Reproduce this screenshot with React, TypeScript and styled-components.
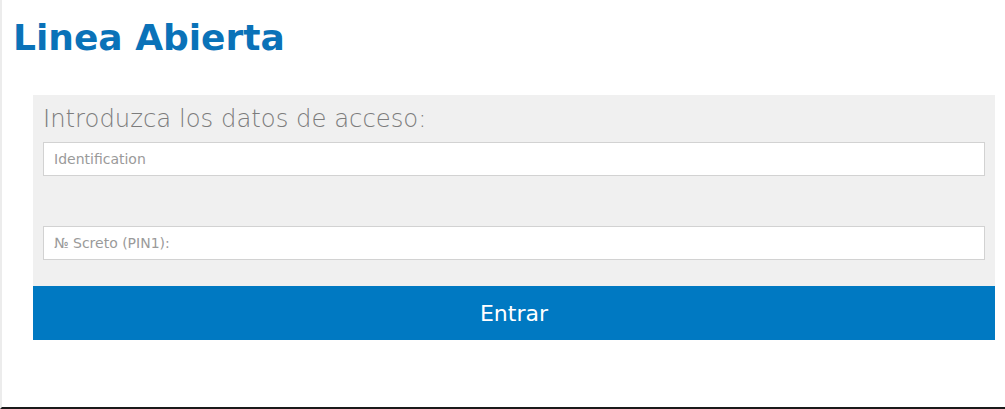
import styled, { createGlobalStyle } from 'styled-components'

const Global = createGlobalStyle`
  html, body {
    margin: 0;
    padding: 0;
    background: #fff;
  }
  body {
    font-family: "DejaVu Sans", Verdana, sans-serif;
  }
`

const Page = styled.div`
  height: 407px;
  border-left: 2px solid #ececec;
  border-bottom: 2px solid #1a1a1a;
  box-sizing: content-box;
  display: flex;
  flex-direction: column;
`

const Title = styled.h1`
  margin: 18px 0 0 11px;
  font-size: 36px;
  font-weight: bold;
  color: #0a72b8;
  line-height: 40px;
`

const LoginBox = styled.form`
  margin: 37px 10px 0 31px;
  display: flex;
  flex-direction: column;
`

const Panel = styled.div`
  background: #f0f0f0;
  padding: 8px 10px 26px 10px;
  display: flex;
  flex-direction: column;
`

const Legend = styled.div`
  font-size: 24.3px;
  font-weight: 200;
  color: #7c7c7c;
  line-height: 32px;
  margin-bottom: 7px;
`

const Field = styled.input<{ $gap?: number }>`
  height: 34px;
  box-sizing: border-box;
  border: 1px solid #d2d2d2;
  background: #fff;
  padding: 0 10px;
  font-family: "DejaVu Sans", Verdana, sans-serif;
  font-size: 14px;
  color: #555;
  margin-top: ${p => p.$gap ?? 0}px;
  outline: none;
  &::placeholder {
    color: #9a9a9a;
  }
`

const Submit = styled.button`
  height: 54px;
  border: none;
  background: #0079c2;
  color: #fff;
  font-family: "DejaVu Sans", Verdana, sans-serif;
  font-size: 22px;
  cursor: pointer;
`

export default function App() {
  return (
    <>
      <Global />
      <Page>
        <Title>Linea Abierta</Title>
        <LoginBox onSubmit={e => e.preventDefault()}>
          <Panel>
            <Legend>Introduzca los datos de acceso:</Legend>
            <Field placeholder="Identification" />
            <Field $gap={50} placeholder="№ Screto (PIN1):" type="text" />
          </Panel>
          <Submit type="submit">Entrar</Submit>
        </LoginBox>
      </Page>
    </>
  )
}
